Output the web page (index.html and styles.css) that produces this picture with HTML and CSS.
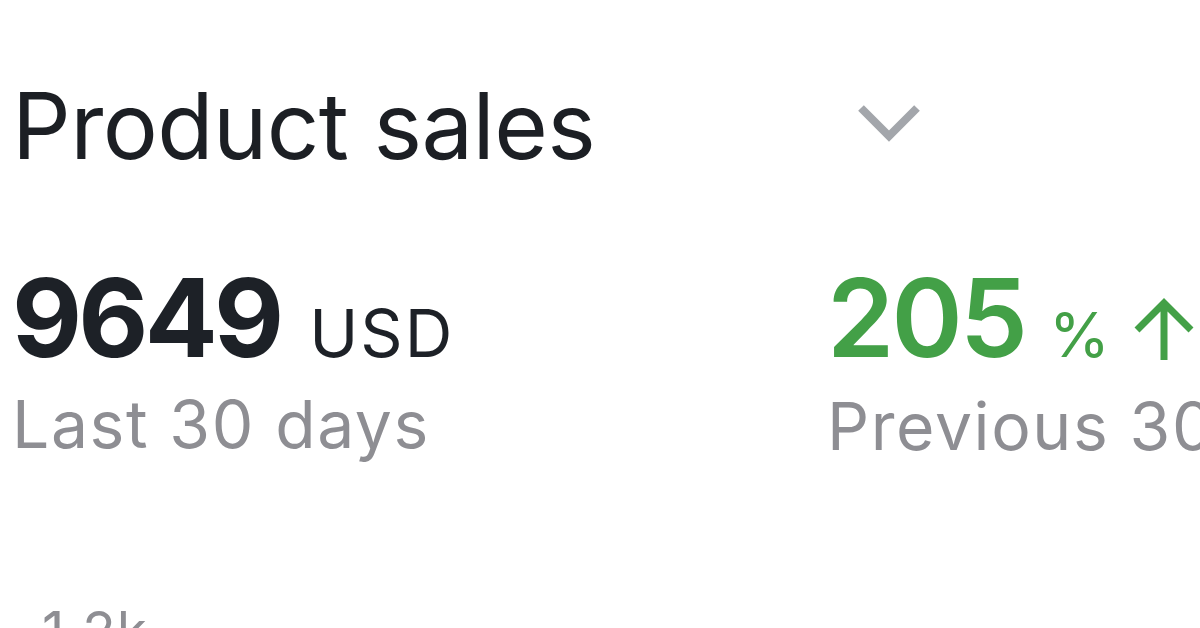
FILE: index.html
```html
<!DOCTYPE html>
<html>
<head>
<meta charset="utf-8">
<link rel="stylesheet" href="styles.css">
</head>
<body>
<div class="card">
  <div class="header">
    <h1 class="title">Product sales</h1>
    <svg class="chevron" width="64" height="40" viewBox="0 0 64 40"><path d="M4 6 L32 34 L60 6" fill="none" stroke="#a3a6ab" stroke-width="8"/></svg>
  </div>
  <div class="stats">
    <div class="stat">
      <div class="value"><span class="num">9649</span><span class="unit">USD</span></div>
      <div class="label">Last 30 days</div>
    </div>
    <div class="stat green">
      <div class="value"><span class="num">205</span><span class="unit pct">%</span><svg class="arrow" width="64" height="64" viewBox="0 0 64 64"><path d="M32 62 V5 M5 32 L32 5 L59 32" fill="none" stroke="#43a047" stroke-width="7"/></svg></div>
      <div class="label">Previous 30 days</div>
    </div>
  </div>
  <div class="axis">1.2k</div>
</div>
</body>
</html>
```
FILE: styles.css
```css
html, body {
  margin: 0;
  padding: 0;
  background: #ffffff;
  width: 1200px;
  height: 628px;
  overflow: hidden;
}
.card {
  font-family: Inter, "Noto Sans", sans-serif;
  padding: 71px 0 0 12px;
  width: 1600px;
}
.header {
  display: flex;
  align-items: center;
  height: 110px;
}
.title {
  margin: 0;
  width: 845px;
  font-size: 92px;
  font-weight: 400;
  line-height: 110px;
  color: #1c1f24;
  letter-spacing: -0.6px;
}
.chevron {
  display: block;
  margin-top: -8px;
}
.stats {
  display: grid;
  grid-template-columns: 815px 1fr;
  margin-top: 85px;
}
.value {
  display: flex;
  align-items: baseline;
  gap: 29px;
  line-height: 104px;
  color: #1d2127;
}
.num {
  font-size: 108px;
  font-weight: 700;
  letter-spacing: -3.8px;
}
.unit {
  font-size: 66px;
  font-weight: 400;
  letter-spacing: 2px;
}
.green .value {
  color: #43a047;
  gap: 24px;
}
.green .num {
  font-weight: 600;
  letter-spacing: -2.8px;
}
.pct {
  font-size: 62px;
  letter-spacing: 0;
}
.arrow {
  display: block;
  align-self: flex-end;
  margin-bottom: 25px;
  margin-left: -2px;
}
.label {
  font-size: 66px;
  line-height: 80px;
  color: #8e8e93;
  letter-spacing: 1.6px;
  margin-top: -1px;
}
.axis {
  margin-top: 135px;
  margin-left: 30px;
  font-size: 55px;
  line-height: 60px;
  color: #8e8e93;
  letter-spacing: 1px;
}
```
